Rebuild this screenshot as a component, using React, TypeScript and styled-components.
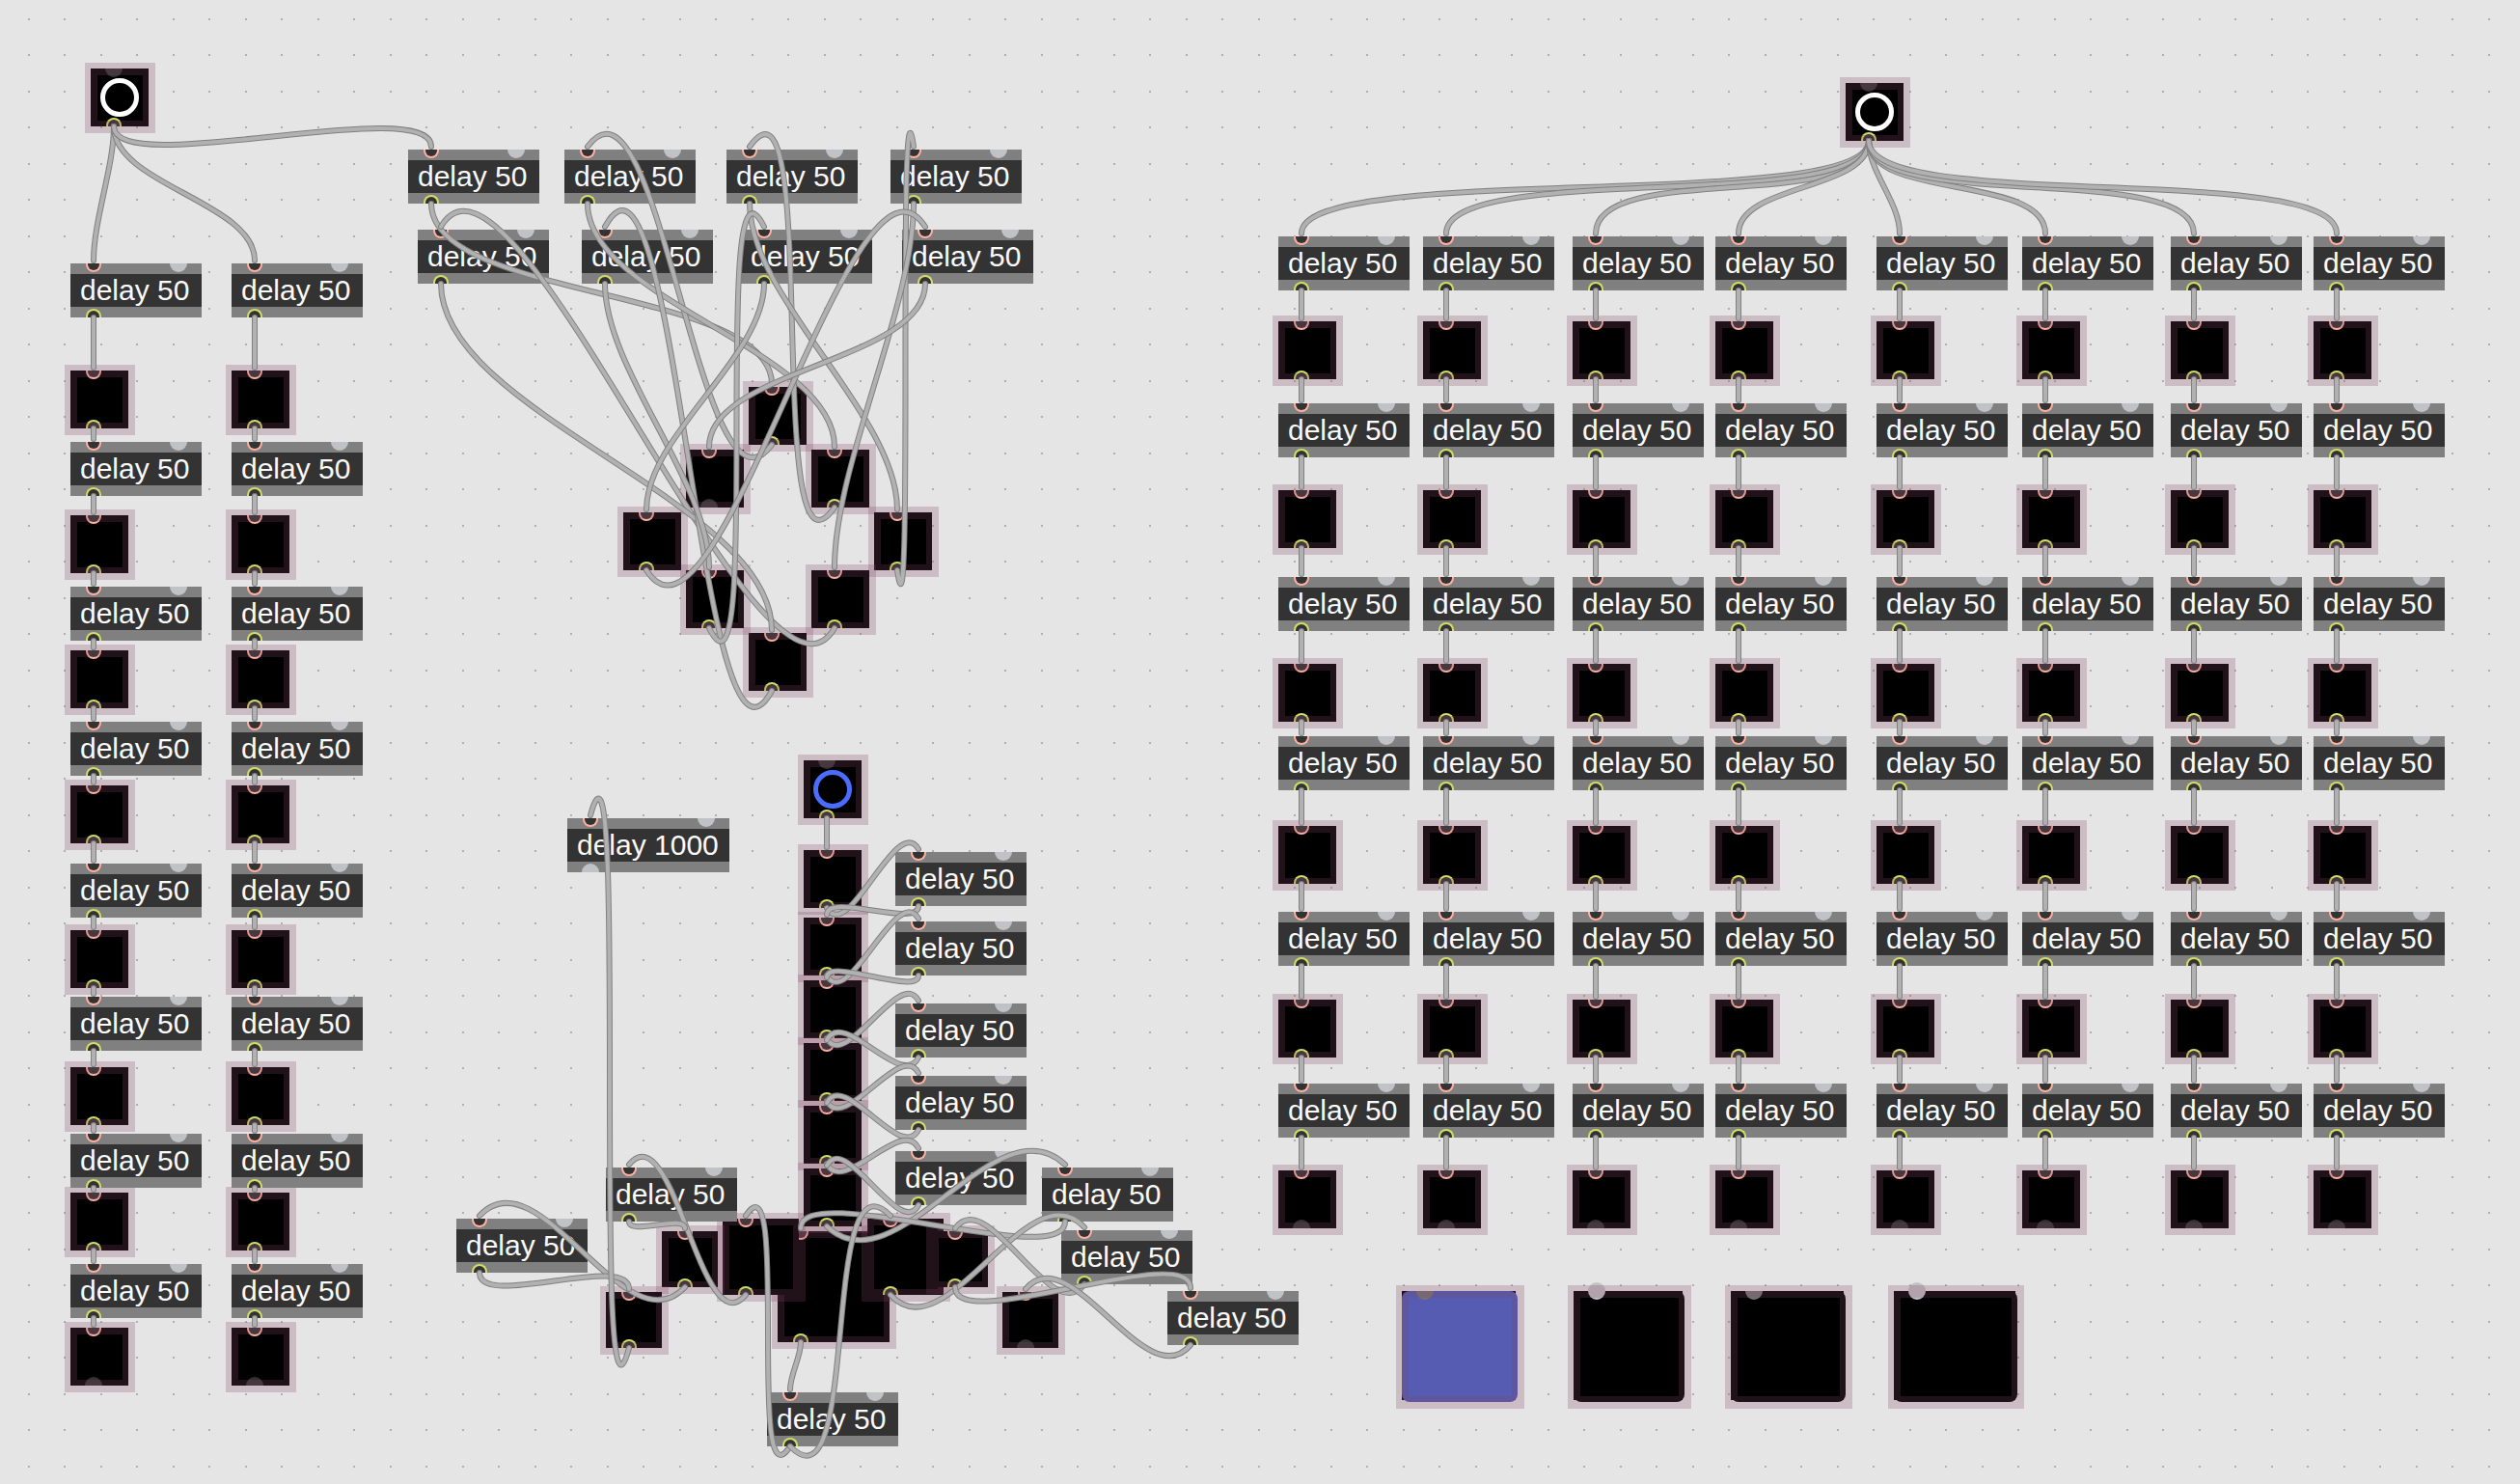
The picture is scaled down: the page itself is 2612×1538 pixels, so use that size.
import React from "react";
import styled, { createGlobalStyle } from "styled-components";

const GlobalStyle = createGlobalStyle`
  body {
    margin: 0;
    background: #e5e5e5;
    font-family: "Liberation Sans", Arial, sans-serif;
  }
`;

const Patcher = styled.main`
  position: relative;
  min-height: 100vh;
  overflow: hidden;
`;

const Layer = styled.svg`
  position: absolute;
  inset: 0;
  width: 100%;
  height: 100%;
  pointer-events: none;
  fill: none;
  stroke-linecap: round;
  stroke-linejoin: round;
`;

const CordEdge = styled.path`
  stroke: #808080;
  stroke-width: 6px;
`;

const CordCore = styled.path`
  stroke: #b1b1b1;
  stroke-width: 4px;
`;

const ObjectBox = styled.div<{ $x: number; $y: number; $w: number }>`
  position: absolute;
  left: ${(p) => p.$x}px;
  top: ${(p) => p.$y}px;
  display: flex;
  align-items: center;
  box-sizing: border-box;
  width: ${(p) => p.$w}px;
  height: 56px;
  border: solid #808080;
  border-width: 11px 0;
  padding-left: 10px;
  background: #333333;
  color: #fafafa;
  font-size: 30px;
  line-height: 34px;
  white-space: nowrap;
`;

type PortKind = "in" | "out" | "idleIn" | "idleOut" | "knob";

const isTop = (k: PortKind) => k === "in" || k === "idleIn";
const isLive = (k: PortKind) => k === "in" || k === "out";

const Port = styled.i<{ $kind: PortKind; $x: number; $tone?: string; $lift: number }>`
  position: absolute;
  box-sizing: border-box;
  left: ${(p) => p.$x - (isLive(p.$kind) ? 8 : 9)}px;
  ${(p) => (p.$kind === "knob" ? "top: -9px;" : isTop(p.$kind) ? `top: -${p.$lift}px;` : `bottom: -${p.$lift}px;`)}
  width: ${(p) => (isLive(p.$kind) ? 16 : 18)}px;
  height: ${(p) => (p.$kind === "knob" ? 18 : 9)}px;
  border-radius: ${(p) => (p.$kind === "knob" ? "9px" : isTop(p.$kind) ? "0 0 9px 9px" : "9px 9px 0 0")};
  background: ${(p) => (isLive(p.$kind) ? "#333333" : p.$tone || "#c0c2c5")};
  ${(p) => p.$kind === "in" && "border: solid #ffb0a0; border-width: 0 2px 2px;"}
  ${(p) => p.$kind === "out" && "border: solid #d2dd66; border-width: 2px 2px 0;"}
`;

const Led = styled.div<{ $x: number; $y: number; $w: number; $h: number }>`
  position: absolute;
  left: ${(p) => p.$x}px;
  top: ${(p) => p.$y}px;
  width: ${(p) => p.$w}px;
  height: ${(p) => p.$h}px;
  background: #000000;
`;

const Bang = styled.button<{ $x: number; $y: number }>`
  position: absolute;
  left: ${(p) => p.$x}px;
  top: ${(p) => p.$y}px;
  display: grid;
  place-items: center;
  width: 60px;
  height: 60px;
  padding: 0;
  border: 0;
  background: #000000;
`;

const Ring = styled.span<{ $color: string }>`
  box-sizing: border-box;
  width: 40px;
  height: 40px;
  border: 5px solid ${(p) => p.$color};
  border-radius: 50%;
`;

const Halo = styled.span`
  position: absolute;
  inset: -6px -7px -7px -6px;
  border: 13px solid rgba(132, 68, 98, 0.25);
`;

const Pad = styled.div<{ $x: number; $w: number; $color: string }>`
  position: absolute;
  left: ${(p) => p.$x}px;
  top: 1338px;
  width: ${(p) => p.$w}px;
  height: 115px;
  background: linear-gradient(#000, #000) 0 0 / ${(p) => p.$w - 2}px 113px no-repeat;
  &::before {
    content: "";
    position: absolute;
    inset: 0;
    border-radius: 8px;
    background: ${(p) => p.$color};
  }
`;

type Point = [number, number];
interface DelaySpec { x: number; y: number; label?: string; w?: number; idleOut?: boolean }
interface LedSpec { x: number; y: number; w?: number; h?: number; idleOut?: boolean }

const delays: DelaySpec[] = [];
const leds: LedSpec[] = [];
const cords: [Point, Point][] = [];

const inlet = (n: { x: number; y: number }): Point => [n.x + 24, n.y - 3];
const delayOut = (n: DelaySpec): Point => [n.x + 24, n.y + 56];
const ledOut = (n: LedSpec): Point => [n.x + 24, n.y + (n.h || 60)];
const bangOut = (n: Point): Point => [n[0] + 24, n[1] + 60];

const leftBang: Point = [94, 71];
const rightBang: Point = [1913, 86];
const blueBang: Point = [833, 788];

/* A chain alternates delay and LED down one column. */
function chain(x: number, delayYs: number[], ledYs: number[], source: Point) {
  let from = bangOut(source);
  delayYs.forEach((y, i) => {
    const d = { x, y };
    const l = { x, y: ledYs[i], idleOut: i === delayYs.length - 1 };
    delays.push(d);
    leds.push(l);
    cords.push([from, inlet(d)], [delayOut(d), inlet(l)]);
    from = ledOut(l);
  });
}

[73, 240].forEach((x) =>
  chain(
    x,
    [273, 458, 608, 748, 895, 1033, 1175, 1310],
    [384, 534, 674, 814, 964, 1106, 1236, 1376],
    leftBang
  )
);
[1325, 1475, 1630, 1778, 1945, 2096, 2250, 2398].forEach((x) =>
  chain(x, [245, 418, 598, 763, 945, 1123], [333, 508, 688, 856, 1036, 1213], rightBang)
);

/* Diamond: each delay feeds one LED, which triggers the next delay. */
const ringDelays: DelaySpec[] = [
  { x: 423, y: 155 }, { x: 585, y: 155 }, { x: 753, y: 155 }, { x: 923, y: 155 },
  { x: 433, y: 238 }, { x: 603, y: 238 }, { x: 768, y: 238 }, { x: 935, y: 238 },
];
const ringLeds: LedSpec[] = [
  { x: 776, y: 401 }, { x: 841, y: 466 }, { x: 906, y: 531 }, { x: 841, y: 591 },
  { x: 776, y: 656 }, { x: 711, y: 591 }, { x: 646, y: 531 }, { x: 711, y: 466, idleOut: true },
];
delays.push(...ringDelays);
leds.push(...ringLeds);
cords.push([bangOut(leftBang), inlet(ringDelays[0])]);
ringDelays.forEach((d, i) => {
  cords.push([delayOut(d), inlet(ringLeds[i])]);
  if (i < 7) cords.push([ledOut(ringLeds[i]), inlet(ringDelays[i + 1])]);
});

/* Fountain: a vertical stem that spreads into the basin. */
const stem: LedSpec[] = [881, 951, 1016, 1081, 1146, 1211].map((y) => ({ x: 833, y }));
const stemDelays: DelaySpec[] = [883, 955, 1040, 1115, 1193].map((y) => ({ x: 928, y }));
const basin: LedSpec = { x: 806, y: 1276, w: 116, h: 115 };
const innerL: LedSpec = { x: 749, y: 1263, w: 79, h: 79 };
const innerR: LedSpec = { x: 899, y: 1263, w: 79, h: 79 };
const midL: LedSpec = { x: 686, y: 1276, w: 58, h: 58 };
const midR: LedSpec = { x: 966, y: 1276, w: 58, h: 58 };
const outerL: LedSpec = { x: 628, y: 1339, w: 58, h: 58 };
const outerR: LedSpec = { x: 1039, y: 1339, w: 58, h: 58, idleOut: true };
leds.push(basin, innerL, innerR, midL, midR, outerL, outerR, ...stem);

const longDelay: DelaySpec = { x: 588, y: 848, w: 168, label: "delay 1000", idleOut: true };
const dMidL: DelaySpec = { x: 628, y: 1210 };
const dOuterL: DelaySpec = { x: 473, y: 1263 };
const dBottom: DelaySpec = { x: 795, y: 1443 };
const dStem: DelaySpec = { x: 1080, y: 1210 };
const dMidR: DelaySpec = { x: 1100, y: 1275 };
const dOuterR: DelaySpec = { x: 1210, y: 1338 };
delays.push(...stemDelays, longDelay, dMidL, dOuterL, dBottom, dStem, dMidR, dOuterR);

cords.push([bangOut(blueBang), inlet(stem[0])]);
stemDelays.forEach((d, i) => {
  cords.push([ledOut(stem[i]), inlet(d)], [delayOut(d), inlet(stem[i + 1])]);
});
cords.push(
  [ledOut(stem[5]), inlet(dStem)],
  [delayOut(dStem), inlet(basin)],
  [ledOut(basin), inlet(dBottom)],
  [delayOut(dBottom), inlet(innerL)],
  [delayOut(dBottom), inlet(innerR)],
  [ledOut(innerL), inlet(dMidL)],
  [delayOut(dMidL), inlet(midL)],
  [ledOut(midL), inlet(dOuterL)],
  [delayOut(dOuterL), inlet(outerL)],
  [ledOut(outerL), inlet(longDelay)],
  [ledOut(innerR), inlet(dMidR)],
  [delayOut(dMidR), inlet(midR)],
  [ledOut(midR), inlet(dOuterR)],
  [delayOut(dOuterR), inlet(outerR)]
);

const bangs = [
  { at: leftBang, color: "#ffffff" },
  { at: rightBang, color: "#ffffff" },
  { at: blueBang, color: "#4a6cff" },
];

const pads = [
  { x: 1453, w: 120, color: "#555cb1", knob: false },
  { x: 1631, w: 115, color: "#000000", knob: true },
  { x: 1794, w: 119, color: "#000000", knob: false },
  { x: 1963, w: 128, color: "#000000", knob: true },
];

/*
 * A cord that runs down leaves and arrives vertically. One that has to climb
 * leans toward its target first, so that it loops round its own box.
 */
function cordPath([[x0, y0], [x1, y1]]: [Point, Point]) {
  const dx = x1 - x0;
  const dy = y1 - y0;
  const span = Math.hypot(dx, dy);
  const reach = 0.25 * span + 10;
  if (dy < -8) {
    const climb = Math.min(reach, 57 - 0.17 * dy);
    const lean = Math.sign(dx) * Math.min(Math.abs(dx), 0.35 * span - 17, 75);
    return `M${x0} ${y0}C${x0 + lean} ${y0 + climb} ${x1 - lean} ${y1 - climb} ${x1} ${y1}`;
  }
  const slack = Math.min(reach, 0.27 * dy + Math.min(0.22 * Math.abs(dx), 50));
  return `M${x0} ${y0}C${x0} ${y0 + slack} ${x1} ${y1 - slack} ${x1} ${y1}`;
}

export default function App() {
  return (
    <>
      <GlobalStyle />
      <Patcher>
        <Layer aria-hidden="true">
          <defs>
            {/* Dots sit every 37.5px, so a 75px tile carries two per axis. */}
            <pattern id="grid" width="75" height="75" patternUnits="userSpaceOnUse">
              <path d="M29 19h2v2h-2zM66 19h2v2h-2zM29 56h2v2h-2zM66 56h2v2h-2z" fill="#b0b0b0" />
            </pattern>
          </defs>
          <rect width="100%" height="100%" fill="url(#grid)" />
        </Layer>

        {bangs.map(({ at, color }) => (
          <Bang key={at.join()} type="button" aria-label="bang" $x={at[0]} $y={at[1]}>
            <Ring $color={color} />
            <Port $kind="idleIn" $x={24} $tone="#333333" $lift={0} />
            <Port $kind="out" $x={24} $lift={0} />
            <Halo />
          </Bang>
        ))}

        {leds.map((l) => (
          <Led key={`${l.x}-${l.y}`} $x={l.x} $y={l.y} $w={l.w || 60} $h={l.h || 60}>
            <Port $kind="in" $x={24} $lift={0} />
            <Port $kind={l.idleOut ? "idleOut" : "out"} $x={24} $tone="#333333" $lift={0} />
            <Halo />
          </Led>
        ))}

        {pads.map((p) => (
          <Pad key={p.x} $x={p.x} $w={p.w} $color={p.color}>
            <Port
              $kind={p.knob ? "knob" : "idleIn"}
              $x={24}
              $tone={p.knob ? "#c0c2c5" : "#747474"}
              $lift={0}
            />
            <Halo />
          </Pad>
        ))}

        {delays.map((d) => {
          const w = d.w || 136;
          return (
            <ObjectBox key={`${d.x}-${d.y}`} $x={d.x} $y={d.y} $w={w}>
              {d.label || "delay 50"}
              <Port $kind="in" $x={24} $lift={11} />
              <Port $kind="idleIn" $x={w - 24} $lift={11} />
              <Port $kind={d.idleOut ? "idleOut" : "out"} $x={24} $lift={11} />
            </ObjectBox>
          );
        })}

        <Layer aria-hidden="true">
          {cords.map((c, i) => {
            const d = cordPath(c);
            return (
              <g key={i}>
                <CordEdge d={d} />
                <CordCore d={d} />
              </g>
            );
          })}
        </Layer>
      </Patcher>
    </>
  );
}
